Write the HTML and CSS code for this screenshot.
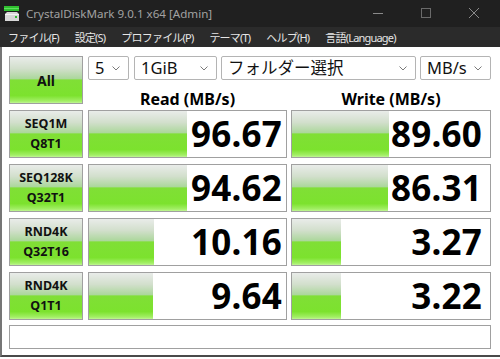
FILE: index.html
```html
<!DOCTYPE html>
<html>
<head>
  <title>CrystalDiskMark</title>
  <link rel="stylesheet" href="styles.css">
</head>
<body>
  <div class="titlebar">
    <svg class="app-icon" width="16" height="16" viewBox="0 0 16 16">
      <rect x="0" y="0" width="15" height="5" fill="#2fc02f"/>
      <rect x="0" y="2" width="15" height="1" fill="#5fe05f"/>
      <path d="M1 8 L3 6 H13 L15 8 V15 H1 Z" fill="#d8d8d8"/>
      <rect x="1" y="8" width="14" height="1" fill="#f4f4f4"/>
      <rect x="11" y="10" width="2" height="2" fill="#33bb33"/>
    </svg>
    <span class="title">CrystalDiskMark 9.0.1 x64 [Admin]</span>
    <div class="controls">
      <svg width="10" height="10" viewBox="0 0 10 10"><line x1="0" y1="5.5" x2="10" y2="5.5" stroke="#8a8a8a"/></svg>
      <svg width="10" height="10" viewBox="0 0 10 10"><rect x="0.5" y="0.5" width="9" height="9" fill="none" stroke="#6a6a6a"/></svg>
      <svg width="10" height="10" viewBox="0 0 10 10"><path d="M0 0 L10 10 M10 0 L0 10" stroke="#8a8a8a"/></svg>
    </div>
  </div>

  <div class="menubar">
    <span>ファイル(F)</span>
    <span>設定(S)</span>
    <span>プロファイル(P)</span>
    <span>テーマ(T)</span>
    <span>ヘルプ(H)</span>
    <span>言語(Language)</span>
  </div>

  <div class="client">
    <div class="top">
      <button class="green-btn all">All</button>
      <div class="top-right">
        <div class="combos">
          <div class="combo count">5<svg class="chev" viewBox="0 0 8 5"><polyline points="0.5,0.5 4,4 7.5,0.5" fill="none" stroke="#7a7a7a"/></svg></div>
          <div class="combo size">1GiB<svg class="chev" viewBox="0 0 8 5"><polyline points="0.5,0.5 4,4 7.5,0.5" fill="none" stroke="#7a7a7a"/></svg></div>
          <div class="combo folder">フォルダー選択<svg class="chev" viewBox="0 0 8 5"><polyline points="0.5,0.5 4,4 7.5,0.5" fill="none" stroke="#7a7a7a"/></svg></div>
          <div class="combo unit">MB/s<svg class="chev" viewBox="0 0 8 5"><polyline points="0.5,0.5 4,4 7.5,0.5" fill="none" stroke="#7a7a7a"/></svg></div>
        </div>
        <div class="heads">
          <div class="head read-head">Read (MB/s)</div>
          <div class="head write-head">Write (MB/s)</div>
        </div>
      </div>
    </div>

    <div class="results">
      <div class="green-btn label">SEQ1M<br>Q8T1</div>
      <div class="cell read" style="background-size: 98px 100%">96.67</div>
      <div class="cell write" style="background-size: 97px 100%">89.60</div>

      <div class="green-btn label">SEQ128K<br>Q32T1</div>
      <div class="cell read" style="background-size: 98px 100%">94.62</div>
      <div class="cell write" style="background-size: 96px 100%">86.31</div>

      <div class="green-btn label">RND4K<br>Q32T16</div>
      <div class="cell read" style="background-size: 65px 100%">10.16</div>
      <div class="cell write" style="background-size: 49px 100%">3.27</div>

      <div class="green-btn label">RND4K<br>Q1T1</div>
      <div class="cell read" style="background-size: 64px 100%">9.64</div>
      <div class="cell write" style="background-size: 49px 100%">3.22</div>
    </div>

    <div class="status"></div>
  </div>
</body>
</html>
```

FILE: styles.css
```css
:root {
  --bar-gradient: linear-gradient(to bottom, #e9ece9 0%, #d2dfcc 25%, #acd79c 47%, #80df36 50%, #7ce22e 84%, #a3ef66 96%, #c0f595 100%);
  --box-border: 1px solid #a0a0a0;
}

body {
  margin: 0;
  width: 500px;
  height: 359px;
  overflow: hidden;
  background: #fff;
  font-family: "Noto Sans", "Noto Sans CJK JP", sans-serif;
  color: #000;
}

.titlebar {
  height: 27px;
  background: #202020;
  display: flex;
  align-items: center;
  padding-left: 4px;
}

.app-icon {
  margin-top: 1px;
}

.title {
  margin-left: 6px;
  font-size: 11.6px;
  color: #a2a2a2;
}

.controls {
  margin-left: auto;
  display: flex;
  gap: 38px;
  padding-right: 21px;
  margin-top: -1px;
}

.menubar {
  height: 20px;
  background: #2b2b2b;
  display: flex;
  align-items: center;
  font-size: 11px;
  letter-spacing: -0.8px;
  color: #e6e6e6;
}

.menubar span {
  padding: 0 8px;
}

.client {
  border-left: 2px solid #767676;
  border-bottom: 2px solid #4a4a4a;
  padding: 9px 9px 6px 7px;
}

.top {
  display: flex;
  gap: 5px;
  height: 48px;
}

.green-btn {
  background: var(--bar-gradient);
  border: var(--box-border);
  box-sizing: border-box;
  font-family: inherit;
  font-weight: 700;
  color: #111;
  text-align: center;
}

.all {
  width: 74px;
  height: 48px;
  font-size: 14px;
  padding: 0;
}

.top-right {
  flex: 1;
  display: flex;
  flex-direction: column;
}

.combos {
  display: flex;
  gap: 4px;
  height: 24px;
}

.combo {
  position: relative;
  box-sizing: border-box;
  height: 24px;
  border: 1px solid #b4b4b4;
  border-radius: 2px;
  background: #fff;
  font-size: 16.5px;
  line-height: 22px;
  padding-left: 6px;
  color: #111;
}

.chev {
  position: absolute;
  right: 8px;
  top: 9px;
  width: 8px;
  height: 5px;
}

.count { width: 41px; margin-right: 1px; }
.size { width: 83px; }
.folder { width: 195px; }
.unit { width: 71px; }

.heads {
  display: flex;
  gap: 4px;
  padding-top: 7px;
}

.head {
  font-size: 16px;
  font-weight: 700;
  line-height: 24px;
  text-align: center;
}

.read-head { width: 199px; }
.write-head { width: 200px; }

.results {
  margin-top: 6px;
  display: grid;
  grid-template-columns: 75px 199px 200px;
  grid-auto-rows: 48px;
  column-gap: 4px;
  row-gap: 6px;
}

.label {
  width: 74px;
  font-size: 12.5px;
  line-height: 20px;
  padding-top: 3px;
}

.cell {
  border: var(--box-border);
  background-color: #fff;
  background-image: var(--bar-gradient);
  background-repeat: no-repeat;
  font-size: 35px;
  font-weight: 700;
  line-height: 46px;
  text-align: right;
  letter-spacing: 0.2px;
}

.read { padding-right: 4px; }
.write { padding-right: 8px; }

.status {
  margin-top: 5px;
  height: 24px;
  border: var(--box-border);
  box-sizing: border-box;
}
```
